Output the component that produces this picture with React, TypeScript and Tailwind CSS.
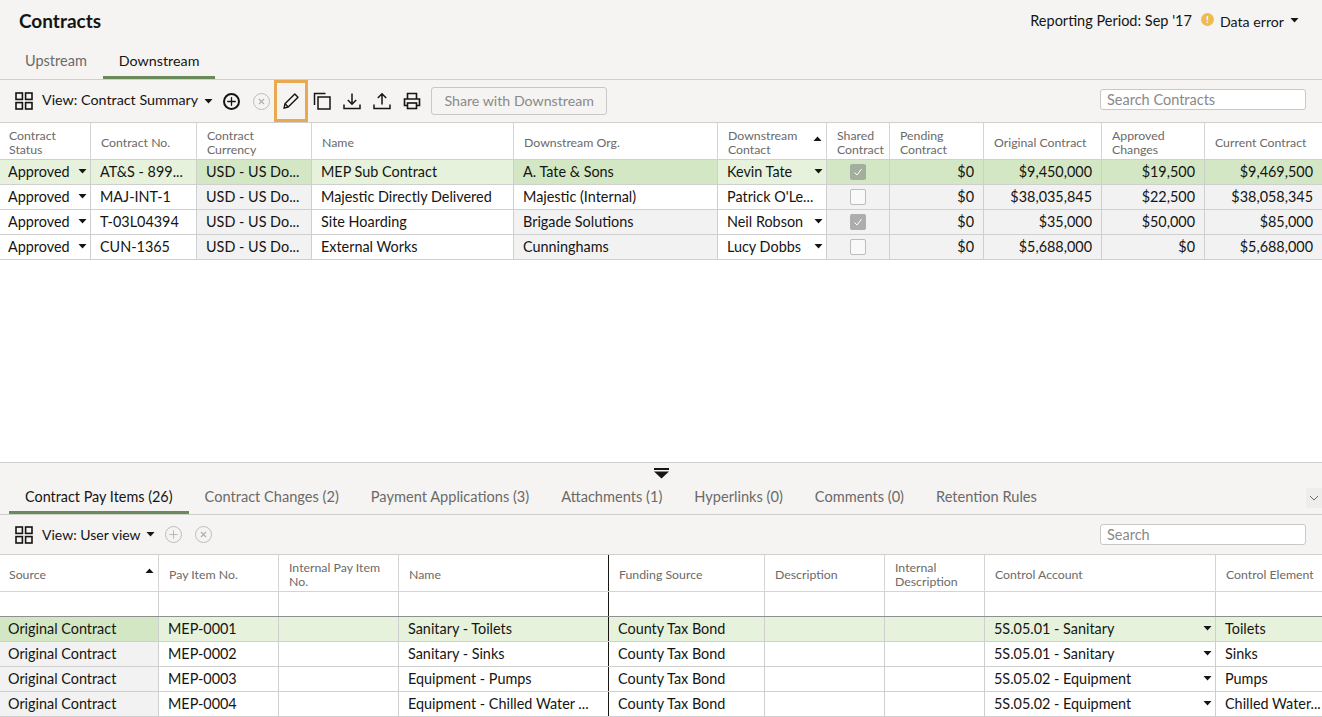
import { Plus, X } from 'lucide-react';

const FONT = "font-['Lato',sans-serif]";

const Caret = ({ up = false, className = '' }: { up?: boolean; className?: string }) => (
  <svg width="9" height="5" viewBox="0 0 9 5" className={`shrink-0 ${className}`}>
    <path d={up ? 'M0.5 5L4.5 0.5L8.5 5Z' : 'M0.5 0L8.5 0L4.5 4.5Z'} fill="#161513" />
  </svg>
);

const GridIcon = () => (
  <svg width="18" height="18" viewBox="0 0 18 18" fill="none" stroke="#161513" strokeWidth="1.6" className="shrink-0">
    <rect x="1" y="1" width="6.4" height="6.4" />
    <rect x="10.6" y="1" width="6.4" height="6.4" />
    <rect x="1" y="10.6" width="6.4" height="6.4" />
    <rect x="10.6" y="10.6" width="6.4" height="6.4" />
  </svg>
);

const CircleIcon = ({ kind, muted }: { kind: 'plus' | 'x'; muted: boolean }) => (
  <span
    className={`flex h-[17px] w-[17px] items-center justify-center rounded-full ${
      muted ? 'border-[1.5px] border-[#bdbcba] text-[#aeadab]' : 'border-2 border-[#161513] text-[#161513]'
    }`}
  >
    {kind === 'plus' ? <Plus size={13} strokeWidth={muted ? 1.5 : 2.4} /> : <X size={9} strokeWidth={3} />}
  </span>
);

const Pencil = () => (
  <svg width="18" height="18" viewBox="0 0 18 18" fill="none" stroke="#161513" strokeWidth="1.4" strokeLinejoin="round">
    <path d="M2 16.2L3 11.8L12.8 2L16 5.2L6.2 15Z" />
    <path d="M3 11.8L6.2 15" />
  </svg>
);

const Copy = () => (
  <svg width="18" height="18" viewBox="0 0 18 18" fill="none" stroke="#161513" strokeWidth="1.5">
    <path d="M12.5 1.5H1.5V13" />
    <rect x="5" y="5" width="12" height="12" />
  </svg>
);

const Download = () => (
  <svg width="18" height="18" viewBox="0 0 18 18" fill="none" stroke="#161513" strokeWidth="1.5">
    <path d="M9 1.5V12M4.8 8L9 12.2L13.2 8M1 12.5V16.5H17V12.5" />
  </svg>
);

const Upload = () => (
  <svg width="18" height="18" viewBox="0 0 18 18" fill="none" stroke="#161513" strokeWidth="1.5">
    <path d="M9 12.5V2M4.8 6L9 1.8L13.2 6M1 12.5V16.5H17V12.5" />
  </svg>
);

const Printer = () => (
  <svg width="18" height="18" viewBox="0 0 18 18" fill="none" stroke="#161513" strokeWidth="1.6">
    <path d="M4.5 7V1.5H13.5V7" />
    <path d="M4.5 13.5H1.5V7H16.5V13.5H13.5" />
    <rect x="4.5" y="11" width="9" height="5.5" />
  </svg>
);

type Cell = {
  text?: string;
  bg?: string;
  right?: boolean;
  caret?: boolean;
  check?: 'on' | 'off';
  selected?: boolean;
};

const green = 'bg-[#e6f2dc]';
const greenDark = 'bg-[#d3e7c4]';
const gray = 'bg-[#f2f2f2]';

const topWidths = [91, 106, 115, 202, 204, 109, 63, 94, 118, 103, 118];
const bottomWidths = [159, 120, 120, 210, 156, 120, 100, 231, 107];

const topHeaders = [
  'Contract\nStatus',
  'Contract No.',
  'Contract\nCurrency',
  'Name',
  'Downstream Org.',
  'Downstream\nContact',
  'Shared\nContract',
  'Pending\nContract',
  'Original Contract',
  'Approved\nChanges',
  'Current Contract',
];

const bottomHeaders = [
  'Source',
  'Pay Item No.',
  'Internal Pay Item\nNo.',
  'Name',
  'Funding Source',
  'Description',
  'Internal\nDescription',
  'Control Account',
  'Control Element',
];

const contracts = [
  ['AT&S - 899...', 'MEP Sub Contract', 'A. Tate & Sons', 'Kevin Tate', 'on', '$9,450,000', '$19,500', '$9,469,500'],
  ['MAJ-INT-1', 'Majestic Directly Delivered', 'Majestic (Internal)', "Patrick O'Le...", 'off', '$38,035,845', '$22,500', '$38,058,345'],
  ['T-03L04394', 'Site Hoarding', 'Brigade Solutions', 'Neil Robson', 'on', '$35,000', '$50,000', '$85,000'],
  ['CUN-1365', 'External Works', 'Cunninghams', 'Lucy Dobbs', 'off', '$5,688,000', '$0', '$5,688,000'],
];

const payItems = [
  ['MEP-0001', 'Sanitary - Toilets', '5S.05.01 - Sanitary', 'Toilets'],
  ['MEP-0002', 'Sanitary - Sinks', '5S.05.01 - Sanitary', 'Sinks'],
  ['MEP-0003', 'Equipment - Pumps', '5S.05.02 - Equipment', 'Pumps'],
  ['MEP-0004', 'Equipment - Chilled Water ...', '5S.05.02 - Equipment', 'Chilled Water...'],
];

const contractRow = (row: string[], i: number): Cell[] => {
  const sel = i === 0;
  const ro = sel ? greenDark : gray;
  const rw = sel ? green : 'bg-white';
  return [
    { text: 'Approved', bg: rw, caret: true },
    { text: row[0], bg: rw },
    { text: 'USD - US Do...', bg: ro },
    { text: row[1], bg: rw },
    { text: row[2], bg: i === 1 ? 'bg-white' : ro },
    { text: row[3], bg: rw, caret: i !== 1 },
    { check: row[4] as 'on' | 'off', bg: ro, selected: sel },
    { text: '$0', bg: ro, right: true },
    { text: row[5], bg: ro, right: true },
    { text: row[6], bg: ro, right: true },
    { text: row[7], bg: ro, right: true },
  ];
};

const payRow = (row: string[], i: number): Cell[] => {
  const sel = i === 0;
  const rw = sel ? green : 'bg-white';
  return [
    { text: 'Original Contract', bg: sel ? greenDark : gray },
    { text: row[0], bg: rw },
    { bg: rw },
    { text: row[1], bg: rw },
    { text: 'County Tax Bond', bg: rw },
    { bg: rw },
    { bg: rw },
    { text: row[2], bg: rw, caret: true },
    { text: row[3], bg: rw },
  ];
};

function BodyCell({ cell, width, dark }: { cell: Cell; width: number; dark?: boolean }) {
  const align = cell.check
    ? 'justify-center'
    : cell.right
      ? 'justify-end pl-2 pr-[9px]'
      : 'justify-between pl-[9px] pr-[3px] first:pl-[8px]';
  return (
    <div
      style={{ width }}
      className={`flex h-full shrink-0 items-center border-r ${dark ? 'border-[#161513]' : 'border-[#cfcfcf]'} ${cell.bg} ${align}`}
    >
      {cell.check ? (
        cell.check === 'on' ? (
          <span
            className={`flex h-4 w-4 items-center justify-center rounded-[2px] ${cell.selected ? 'bg-[#a3ae9c]' : 'bg-[#adadad]'}`}
          >
            <svg width="10" height="10" viewBox="0 0 10 10" fill="none" stroke="#fff" strokeWidth="1">
              <path d="M1.5 5.5L4 8L8.5 2" />
            </svg>
          </span>
        ) : (
          <span className="h-4 w-4 rounded-[2px] border border-[#bdbcba] bg-[#f9f9f9]" />
        )
      ) : (
        <span className="whitespace-nowrap pb-[1px] text-[14.4px] text-[#161513]">{cell.text}</span>
      )}
      {cell.caret && <Caret className="mb-[2px]" />}
    </div>
  );
}

function HeaderCell({ label, width, dark, sort }: { label: string; width: number; dark?: boolean; sort?: boolean }) {
  return (
    <div
      style={{ width }}
      className={`relative flex h-full shrink-0 items-center border-r pl-[10px] pr-1 pt-[4px] text-[12.3px] leading-[14px] text-[#6b6a68] first:pl-[9px] ${
        dark ? 'border-[#161513]' : 'border-[#d4d4d4]'
      }`}
    >
      <span className="whitespace-pre-line">{label}</span>
      {sort && <Caret up className="absolute right-[4px] top-[13px]" />}
    </div>
  );
}

function Toolbar({ children }: { children: React.ReactNode }) {
  return <div className="flex h-full items-center bg-[#f5f4f2] pl-[15px] pr-[16px]">{children}</div>;
}

export default function App() {
  return (
    <div className={`flex h-[717px] w-[1322px] flex-col overflow-hidden bg-white ${FONT}`}>
      {/* Page header */}
      <div className="h-[80px] shrink-0 border-b border-[#cfcfcf] bg-[#f5f4f2]">
        <div className="flex h-[44px] items-center justify-between pl-[19px] pr-[23px]">
          <h1 className="pb-[2px] text-[19px] font-bold text-[#161513]">Contracts</h1>
          <div className="flex items-center text-[14.5px] text-[#161513]">
            <span className="pb-[3px]">Reporting Period: Sep '17</span>
            <span className="ml-[9px] mb-[6px] flex h-[13px] w-[13px] items-center justify-center rounded-full bg-[#ecbc53] text-[10px] font-bold text-white">
              !
            </span>
            <span className="ml-[6px] text-[14.2px]">Data error</span>
            <Caret className="ml-[6px] mb-[3px]" />
          </div>
        </div>
        <div className="flex h-[35px] items-stretch pl-[9px] text-[14.5px]">
          <div className="flex items-center border-b-[3px] border-transparent px-[16px] pt-[2px] text-[#6b6a68]">Upstream</div>
          <div className="flex items-center border-b-[3px] border-[#6b8a5a] px-[16px] pt-[2px] text-[14.3px] text-[#161513]">Downstream</div>
        </div>
      </div>

      {/* Contract toolbar */}
      <div className="h-[43px] shrink-0 border-b border-[#cfcfcf]">
        <Toolbar>
          <GridIcon />
          <span className="ml-[9px] pb-[3px] text-[14.3px] text-[#161513]">View: Contract Summary</span>
          <Caret className="ml-[6px]" />
          <span className="ml-[10px]">
            <CircleIcon kind="plus" muted={false} />
          </span>
          <span className="ml-[13px]">
            <CircleIcon kind="x" muted />
          </span>
          <div className="ml-[4px] flex h-[42px] w-[34px] items-center justify-center border-[3px] border-[#e9a951]">
            <Pencil />
          </div>
          <div className="ml-[5px] flex items-center gap-[12px]">
            <Copy />
            <Download />
            <Upload />
            <Printer />
          </div>
          <button className="ml-[10px] h-[28px] w-[176px] rounded-[3px] border border-[#c9c8c6] text-[14.2px] text-[#8a8987]">
            Share with Downstream
          </button>
          <div className="mb-[3px] ml-auto flex h-[21px] w-[206px] items-center rounded-[3px] border border-[#c9c8c6] bg-white px-[6px] text-[14.5px] text-[#8a8987]">
            Search Contracts
          </div>
        </Toolbar>
      </div>

      {/* Contract table */}
      <div className="h-[339px] shrink-0">
        <div className="flex h-[37px] border-b border-[#cfcfcf]">
          {topHeaders.map((h, i) => (
            <HeaderCell key={h} label={h} width={topWidths[i]} sort={i === 5} />
          ))}
        </div>
        {contracts.map((row, r) => (
          <div key={row[0]} className="flex h-[25px] border-b border-[#cfcfcf]">
            {contractRow(row, r).map((c, i) => (
              <BodyCell key={i} cell={c} width={topWidths[i]} />
            ))}
          </div>
        ))}
      </div>

      {/* Detail panel */}
      <div className="relative min-h-0 flex-1 border-t border-[#cfcfcf]">
        <div className="absolute left-[654px] top-[5px]">
          <svg width="15" height="11" viewBox="0 0 15 11">
            <rect x="0" y="0" width="15" height="2" fill="#161513" />
            <path d="M0 3.5H15L7.5 10.5Z" fill="#161513" />
          </svg>
        </div>
        <div className="flex h-[52px] items-end border-b border-[#cfcfcf] bg-[#f5f4f2] pl-[9px] text-[14.6px] text-[#6b6a68]">
          <div className="flex h-[32px] items-center border-b-[3px] border-[#6b8a5a] px-[16px] text-[14.4px] text-[#161513]">
            Contract Pay Items (26)
          </div>
          {['Contract Changes (2)', 'Payment Applications (3)', 'Attachments (1)', 'Hyperlinks (0)', 'Comments (0)', 'Retention Rules'].map(
            (t) => (
              <div key={t} className="flex h-[32px] items-center border-b-[3px] border-transparent px-[16px]">
                {t}
              </div>
            ),
          )}
          <div className="ml-auto mb-[6px] flex h-[20px] w-[16px] items-center justify-center bg-[#eeedeb]">
            <svg width="10" height="6" viewBox="0 0 10 6" fill="none" stroke="#6b6a68" strokeWidth="1">
              <path d="M1 1L5 5L9 1" />
            </svg>
          </div>
        </div>
        <div className="h-[40px] border-b border-[#cfcfcf]">
          <Toolbar>
            <GridIcon />
            <span className="ml-[9px] text-[14px] text-[#161513]">View: User view</span>
            <Caret className="ml-[5px]" />
            <span className="ml-[10px]">
              <CircleIcon kind="plus" muted />
            </span>
            <span className="ml-[13px]">
              <CircleIcon kind="x" muted />
            </span>
            <div className="ml-auto flex h-[21px] w-[206px] items-center rounded-[3px] border border-[#c9c8c6] bg-white px-[6px] text-[14.5px] text-[#8a8987]">
              Search
            </div>
          </Toolbar>
        </div>
        <div className="flex h-[37px] border-b border-[#d4d4d4]">
          {bottomHeaders.map((h, i) => (
            <HeaderCell key={h} label={h} width={bottomWidths[i]} dark={i === 3} sort={i === 0} />
          ))}
        </div>
        <div className="flex h-[25px] border-b border-[#8f8f8f]">
          {bottomWidths.map((w, i) => (
            <BodyCell key={i} cell={{ bg: 'bg-white' }} width={w} dark={i === 3} />
          ))}
        </div>
        {payItems.map((row, r) => (
          <div key={row[0]} className="flex h-[25px] border-b border-[#cfcfcf]">
            {payRow(row, r).map((c, i) => (
              <BodyCell key={i} cell={c} width={bottomWidths[i]} dark={i === 3} />
            ))}
          </div>
        ))}
      </div>
    </div>
  );
}
